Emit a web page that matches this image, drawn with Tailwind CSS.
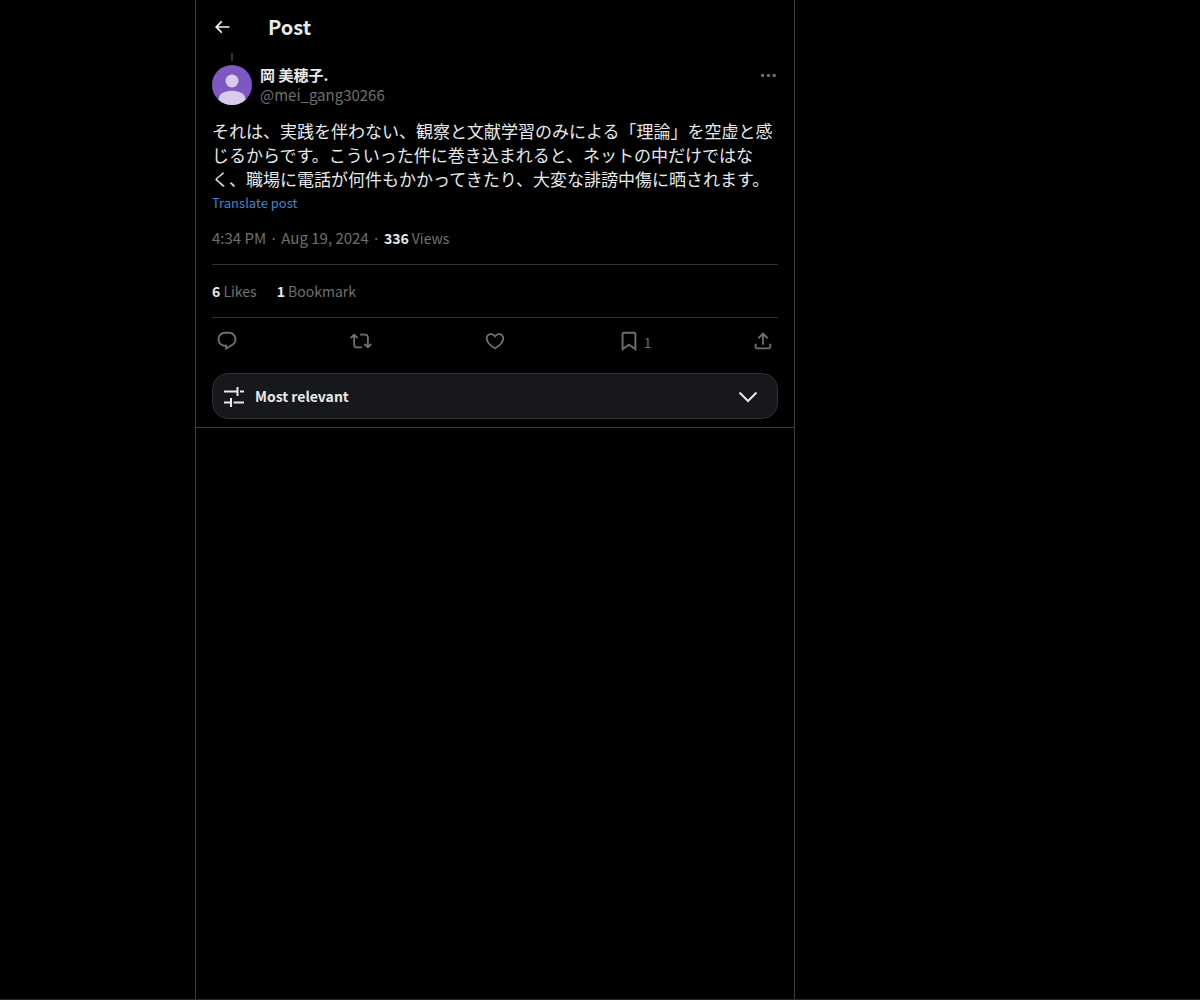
<!doctype html>
<html lang="en">

<head>
  <meta charset="UTF-8" />
  <meta name="viewport" content="width=device-width, initial-scale=1.0" />
  <script src="https://cdn.jsdelivr.net/npm/@tailwindcss/browser@4"></script>
  <title>Post</title>
</head>

<body class="bg-black text-[#e7e9ea] font-['Noto_Sans_CJK_JP',sans-serif] text-[15px] leading-5">
  <div class="min-h-screen flex border-b border-[#2a2527] pl-[195px]">
    <main class="w-full max-w-[600px] border-x border-[#3a3c3e]">

      <!-- Top bar -->
      <header class="flex items-center h-[53px] px-4">
        <button type="button" aria-label="Back" class="w-14">
          <svg viewBox="0 0 24 24" class="size-5 fill-[#eff3f4]"><path d="M7.414 13l5.043 5.04-1.414 1.42L3.586 12l7.457-7.46 1.414 1.42L7.414 11H21v2H7.414z" /></svg>
        </button>
        <h1 class="text-xl leading-6 font-bold">Post</h1>
      </header>

      <article class="px-4">
        <div class="w-10 h-3 flex justify-center">
          <span class="w-[2px] h-2 bg-[#333639]"></span>
        </div>

        <!-- Author -->
        <div class="flex gap-2">
          <svg viewBox="0 0 40 40" role="img" aria-label="岡 美穂子." class="size-10 rounded-full shrink-0">
            <rect width="40" height="40" fill="#7e57c2" />
            <circle cx="20" cy="16" r="6.5" fill="#d8cbed" />
            <path d="M6.500 35c0-5.500 5-9.200 13.500-9.200s13.500 3.700 13.500 9.200v5h-27z" fill="#d8cbed" />
          </svg>
          <div class="flex-1">
            <p class="font-bold">岡 美穂子.</p>
            <a href="#" class="block text-[#6e7073]">@mei_gang30266</a>
          </div>
          <button type="button" aria-label="More" class="self-start h-5">
            <svg viewBox="0 0 24 24" class="size-5 fill-[#6e7073]"><path d="M3.500 12.500c0-1.100.9-2 2-2s2 .9 2 2-.9 2-2 2-2-.9-2-2zm9 2c1.100 0 2-.9 2-2s-.9-2-2-2-2 .9-2 2 .9 2 2 2zm7 0c1.100 0 2-.9 2-2s-.9-2-2-2-2 .9-2 2 .9 2 2 2z" /></svg>
          </button>
        </div>

        <p class="mt-[14px] text-[17px] leading-6">それは、実践を伴わない、観察と文献学習のみによる「理論」を空虚と感じるからです。こういった件に巻き込まれると、ネットの中だけではなく、職場に電話が何件もかかってきたり、大変な誹謗中傷に晒されます。</p>
        <button type="button" class="block h-6 text-[13px] leading-6 text-[#3f87cb]">Translate post</button>

        <p class="pt-[13px] pb-4 text-[#6e7073]">4:34 PM · Aug 19, 2024 · <span class="text-sm leading-5"><strong class="text-[#e7e9ea]">336</strong> Views</span></p>

        <div class="flex gap-5 py-4 border-y border-[#2f3336] text-sm leading-5 text-[#6e7073]">
          <a href="#"><strong class="text-[#e7e9ea]">6</strong> Likes</a>
          <a href="#"><strong class="text-[#e7e9ea]">1</strong> Bookmark</a>
        </div>

        <!-- Actions -->
        <div class="flex items-center h-[46px] px-1 text-[13px] text-[#6e7073]">
          <div class="flex-1">
            <button type="button" aria-label="Reply" class="block">
              <svg viewBox="0 0 24 24" class="size-[22px] fill-current"><path d="M1.751 10c0-4.420 3.584-8 8.005-8h4.366c4.490 0 8.129 3.640 8.129 8.130 0 2.960-1.607 5.680-4.196 7.110l-8.054 4.460v-3.690h-.067c-4.490.1-8.183-3.510-8.183-8.010zm8.005-6c-3.317 0-6.005 2.690-6.005 6 0 3.370 2.770 6.080 6.138 6.010l.351-.01h1.761v2.300l5.087-2.810c1.951-1.080 3.163-3.130 3.163-5.360 0-3.390-2.744-6.130-6.129-6.130H9.756z" /></svg>
            </button>
          </div>
          <div class="flex-1">
            <button type="button" aria-label="Repost" class="block">
              <svg viewBox="0 0 24 24" class="size-[22px] fill-current"><path d="M4.500 3.880l4.432 4.140-1.364 1.460L5.500 7.550V16c0 1.100.896 2 2 2H13v2H7.500c-2.209 0-4-1.790-4-4V7.550L1.432 9.480.068 8.020 4.500 3.880zM16.500 6H11V4h5.500c2.209 0 4 1.790 4 4v8.450l2.068-1.930 1.364 1.460-4.432 4.140-4.432-4.140 1.364-1.460 2.068 1.930V8c0-1.100-.896-2-2-2z" /></svg>
            </button>
          </div>
          <div class="flex-1">
            <button type="button" aria-label="Like" class="block">
              <svg viewBox="0 0 24 24" class="size-[22px] fill-current"><path d="M16.697 5.500c-1.222-.06-2.679.51-3.890 2.160l-.805 1.090-.806-1.090C9.984 6.010 8.526 5.440 7.304 5.500c-1.243.07-2.349.78-2.910 1.910-.552 1.120-.633 2.780.479 4.820 1.074 1.970 3.257 4.270 7.129 6.610 3.870-2.340 6.052-4.640 7.126-6.610 1.111-2.040 1.030-3.700.477-4.820-.561-1.130-1.666-1.840-2.908-1.910zm4.187 7.690c-1.351 2.480-4.001 5.120-8.379 7.670l-.503.3-.504-.3c-4.379-2.550-7.029-5.190-8.382-7.670-1.360-2.500-1.410-4.860-.514-6.670.887-1.790 2.647-2.910 4.601-3.010 1.651-.09 3.368.56 4.798 2.010 1.429-1.450 3.146-2.100 4.796-2.010 1.954.1 3.714 1.220 4.601 3.010.896 1.810.846 4.170-.514 6.670z" /></svg>
            </button>
          </div>
          <div class="flex-1">
            <button type="button" aria-label="1 Bookmark" class="flex items-end gap-1">
              <svg viewBox="0 0 24 24" class="size-[22px] fill-current"><path d="M4 4.500C4 3.120 5.119 2 6.500 2h11C18.881 2 20 3.120 20 4.500v18.440l-8-5.710-8 5.710V4.500zM6.500 4c-.276 0-.5.220-.5.500v14.560l6-4.290 6 4.290V4.500c0-.280-.224-.5-.5-.5h-11z" /></svg>
              <span class="leading-[18px]">1</span>
            </button>
          </div>
          <button type="button" aria-label="Share">
            <svg viewBox="0 0 24 24" class="size-[22px] fill-current"><path d="M12 2.590l5.700 5.700-1.410 1.420L13 6.410V16h-2V6.410l-3.300 3.300-1.410-1.420L12 2.590zM21 15l-.02 3.510c0 1.380-1.120 2.490-2.500 2.490H5.500C4.110 21 3 19.880 3 18.500V15h2v3.500c0 .280.220.5.500.5h12.980c.280 0 .5-.220.5-.5L19 15h2z" /></svg>
          </button>
        </div>
      </article>

      <!-- Reply sorting -->
      <div class="px-4 pt-[9px] pb-2 border-b border-[#3a3c3e]">
        <button type="button" class="flex items-center w-full h-[46px] pl-2 pr-4 rounded-2xl border border-[#2f3336] bg-[#16181c] font-bold text-sm leading-5">
          <svg viewBox="0 0 26 26" class="size-[26px] mr-2 fill-none stroke-[#e7e9ea] stroke-2"><path d="M3 8.500h13M16.500 4v9M19 8.500h4M3 19.500h7M10 15v9M12.500 19.500H23" /></svg>
          <span>Most relevant</span>
          <svg viewBox="0 0 26 26" class="size-[26px] ml-auto fill-none stroke-[#e7e9ea] stroke-2"><path d="M4.500 9.500l8.500 8.500 8.500-8.500" /></svg>
        </button>
      </div>
    </main>
  </div>
</body>

</html>
